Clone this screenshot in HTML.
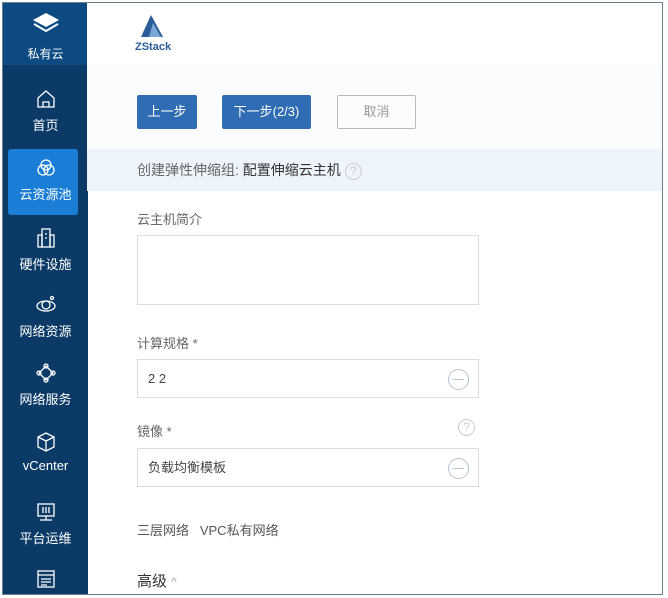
<!DOCTYPE html>
<html><head><meta charset="utf-8"><style>
*{box-sizing:border-box;margin:0;padding:0}
body{width:668px;height:598px;background:#fff;font-family:"Liberation Sans","Noto Sans CJK SC",sans-serif;position:relative;overflow:hidden}
.frame{position:absolute;left:2px;top:2px;width:661px;height:593px;border:1px solid #6b7f90;overflow:hidden;background:#fff}
.side{position:absolute;left:0;top:0;width:85px;height:100%;background:#0b3a66}
.side .top{height:62px;background:#0e4a82;text-align:center;color:#fff;font-size:12px;overflow:hidden}
.item{position:absolute;left:0;width:85px;text-align:center;color:#fff;font-size:13px}
.item svg{display:block;margin:0 auto}
.act{position:absolute;left:5px;top:146px;width:70px;height:66px;background:#1a7ed6;border-radius:3px}
.main{position:absolute;left:84px;top:0;right:0;bottom:0}
.hdr{height:62px;background:#fff}
.band1{position:absolute;top:62px;left:0;right:0;height:84px;background:#fbfcfd}
.btn{position:absolute;top:92px;height:34px;font-size:13px;line-height:34px;text-align:center;border-radius:2px}
.blue{background:#2f6cb3;color:#fff}
.title{position:absolute;top:146px;left:0;right:0;height:42px;background:#eef4fb;color:#666;font-size:14px;line-height:42px;padding-left:50px}
.lbl{position:absolute;left:50px;font-size:13px;color:#666}
.box{position:absolute;left:50px;width:342px;border:1px solid #ddd;background:#fff;font-size:13px;color:#444;padding-left:10px}
.minus{position:absolute;right:9px;top:9px;width:21px;height:21px;border:1.5px solid #b8c2d0;border-radius:50%}
.minus:after{content:"";position:absolute;left:4px;right:4px;top:8.5px;height:1.5px;background:#b8c2d0}
.q{display:inline-block;width:17px;height:17px;border:1px solid #ccc;border-radius:50%;color:#ccc;font-size:12px;line-height:15px;text-align:center;vertical-align:middle}
</style></head><body>
<div class="frame">
<div class="side">
 <div class="top">
  <svg width="32" height="24" viewBox="0 0 32 24" style="display:block;margin:9px auto 0"><path d="M16 1 L29 8 L16 15 L3 8Z" fill="#fff"/><path d="M4 12 L16 19 L28 12" stroke="#fff" stroke-width="2" fill="none"/></svg>
  <div style="margin-top:9px">私有云</div>
 </div>
 <div class="act"></div>
 <div class="item" style="top:85px"><svg width="22" height="22" viewBox="0 0 22 22" fill="none" stroke="#fff" stroke-width="1.3"><path d="M3 10 L11 3 L19 10 V19 H3Z M8 19 V14 H14 V19"/></svg><div style="margin-top:5px">首页</div></div>
 <div class="item" style="top:154px"><svg width="22" height="22" viewBox="0 0 22 22" fill="none" stroke="#fff" stroke-width="1.3"><circle cx="11" cy="8" r="5"/><circle cx="8" cy="13" r="5"/><circle cx="14" cy="13" r="5"/></svg><div style="margin-top:5px">云资源池</div></div>
 <div class="item" style="top:224px"><svg width="22" height="22" viewBox="0 0 22 22" fill="none" stroke="#fff" stroke-width="1.3"><rect x="7" y="2" width="8" height="18"/><path d="M3 8H7V20H3Z M15 8H19V20H15Z M10 7H12 M10 11H12"/></svg><div style="margin-top:5px">硬件设施</div></div>
 <div class="item" style="top:291px"><svg width="22" height="22" viewBox="0 0 22 22" fill="none" stroke="#fff" stroke-width="1.3"><ellipse cx="11" cy="12" rx="9" ry="5"/><circle cx="11" cy="11" r="4"/><circle cx="17" cy="4" r="1.5"/></svg><div style="margin-top:5px">网络资源</div></div>
 <div class="item" style="top:359px"><svg width="22" height="22" viewBox="0 0 22 22" fill="none" stroke="#fff" stroke-width="1.3"><path d="M11 4 L18 11 L11 18 L4 11Z"/><circle cx="11" cy="4" r="2"/><circle cx="18" cy="11" r="2"/><circle cx="11" cy="18" r="2"/><circle cx="4" cy="11" r="2"/></svg><div style="margin-top:5px">网络服务</div></div>
 <div class="item" style="top:428px"><svg width="22" height="22" viewBox="0 0 22 22" fill="none" stroke="#fff" stroke-width="1.3"><path d="M11 2 L19 6 V16 L11 20 L3 16 V6Z M3 6 L11 10 L19 6 M11 10 V20"/></svg><div style="margin-top:5px">vCenter</div></div>
 <div class="item" style="top:498px"><svg width="22" height="22" viewBox="0 0 22 22" fill="none" stroke="#fff" stroke-width="1.3"><rect x="3" y="3" width="16" height="12"/><path d="M8 6V12 M11 6V12 M14 6V12 M11 15V19 M5 19H17"/></svg><div style="margin-top:5px">平台运维</div></div>
 <div class="item" style="top:565px"><svg width="22" height="22" viewBox="0 0 22 22" fill="none" stroke="#fff" stroke-width="1.3"><rect x="3" y="3" width="16" height="16"/><path d="M3 7H19 M6 11H16 M6 14H16 M6 17H12"/></svg></div>
</div>
<div class="main">
 <div class="hdr">
  <svg width="30" height="26" viewBox="0 0 30 26" style="position:absolute;left:50px;top:10px"><path d="M14 2 L26 24 H4Z" fill="#2a5c9a"/><path d="M16 10 L24 24 H12Z" fill="#7aa7d6"/></svg>
  <div style="position:absolute;left:48px;top:38px;font-weight:bold;font-size:11px;color:#2a5c9a">ZStack</div>
 </div>
 <div class="band1"></div>
 <div class="btn blue" style="left:50px;width:60px">上一步</div>
 <div class="btn blue" style="left:135px;width:89px">下一步(2/3)</div>
 <div class="btn" style="left:250px;width:79px;border:1px solid #bbb;color:#999;line-height:32px">取消</div>
 <div class="title">创建弹性伸缩组: <span style="color:#333">配置伸缩云主机</span> <span class="q">?</span></div>
 <div class="lbl" style="top:206px">云主机简介</div>
 <div class="box" style="top:232px;height:70px"></div>
 <div class="lbl" style="top:330px">计算规格 *</div>
 <div class="box" style="top:356px;height:39px;line-height:38px">2 2<div class="minus"></div></div>
 <div class="lbl" style="top:418px">镜像 *</div>
 <span class="q" style="position:absolute;left:371px;top:416px">?</span>
 <div class="box" style="top:445px;height:39px;line-height:38px">负载均衡模板<div class="minus"></div></div>
 <div class="lbl" style="top:517px;color:#555">三层网络 &nbsp;&nbsp;VPC私有网络</div>
 <div class="lbl" style="top:567px;font-size:15px;color:#333">高级 <span style="color:#aaa;font-size:12px">^</span></div>
</div>
</div>
</body></html>
